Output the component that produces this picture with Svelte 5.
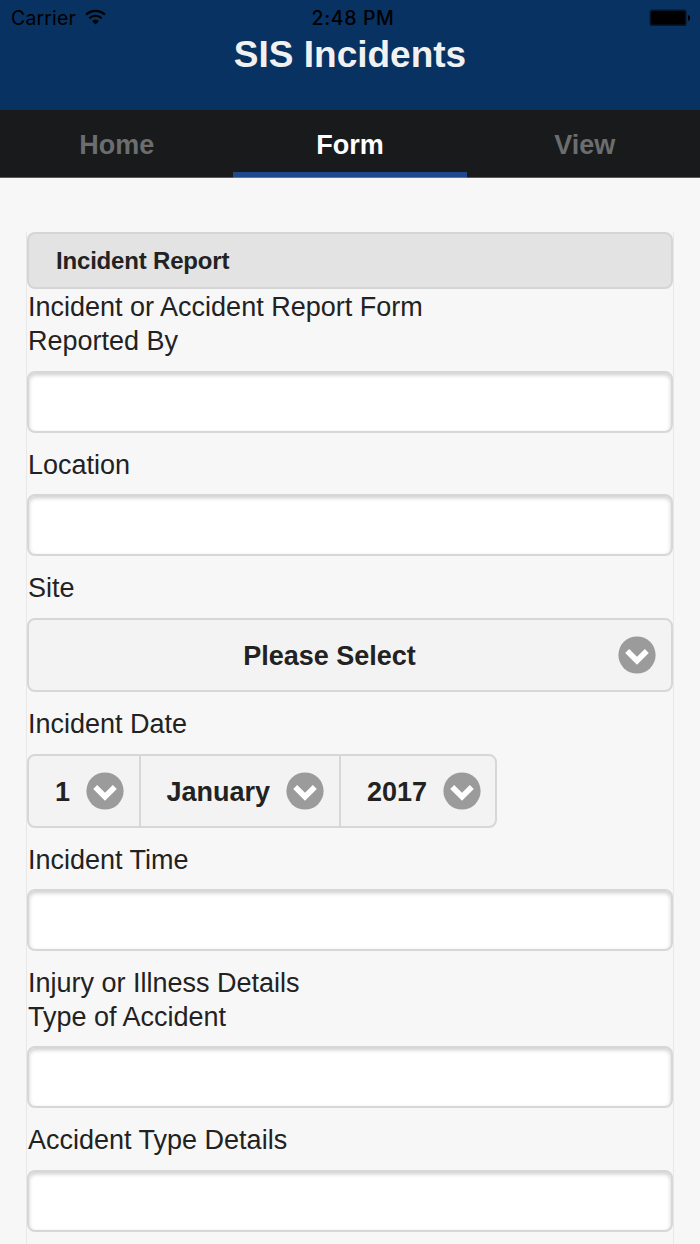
<script>
  const tabs = ['Home', 'Form', 'View'];
  const active = 'Form';
  const fields = [
    { labels: ['Incident or Accident Report Form', 'Reported By'], kind: 'text' },
    { labels: ['Location'], kind: 'text' },
    { labels: ['Site'], kind: 'select' },
    { labels: ['Incident Date'], kind: 'date' },
    { labels: ['Incident Time'], kind: 'text' },
    { labels: ['Injury or Illness Details', 'Type of Accident'], kind: 'text' },
    { labels: ['Accident Type Details'], kind: 'text' }
  ];
  const dateParts = [
    { name: 'day', value: '1' },
    { name: 'month', value: 'January' },
    { name: 'year', value: '2017' }
  ];
</script>

{#snippet arrow()}
  <svg class="arrow" viewBox="0 0 38 38" aria-hidden="true">
    <circle cx="19" cy="19" r="18.6" fill="#9b9b9b" />
    <path d="M9.2 15 L19 24.7 L28.8 15" fill="none" stroke="#fff" stroke-width="5.6" />
  </svg>
{/snippet}

<div class="page">
  <header>
    <div class="status">
      <div class="carrier">
        <span>Carrier</span>
        <svg class="wifi" viewBox="0 0 22 16" aria-hidden="true">
          <path d="M1.2 5.5 A14 14 0 0 1 20.8 5.5" fill="none" stroke="#000" stroke-width="2.3" />
          <path d="M4.6 9.3 A9.2 9.2 0 0 1 17.4 9.3" fill="none" stroke="#000" stroke-width="2.3" />
          <path d="M7.5 12.4 A5.3 5.3 0 0 1 14.5 12.4 L11 15.8 Z" fill="#000" />
        </svg>
      </div>
      <span class="clock">2:48 PM</span>
      <svg class="battery" viewBox="0 0 42 18" aria-hidden="true">
        <rect x="0.6" y="0.6" width="37" height="16.4" rx="2.6" fill="#04172d" />
        <rect x="2" y="2" width="34.2" height="13.6" rx="1" fill="#000" />
        <path d="M39 6 Q41.2 6.5 41.2 9 Q41.2 11.5 39 12 Z" fill="#000" />
      </svg>
    </div>
    <h1>SIS Incidents</h1>
  </header>

  <nav>
    {#each tabs as tab}
      <div class="tab" class:active={tab === active}><span>{tab}</span></div>
    {/each}
  </nav>

  <main>
    <h2>Incident Report</h2>
    {#each fields as field}
      <div class="field">
        {#each field.labels as label}
          <div class="label">{label}</div>
        {/each}
        {#if field.kind === 'text'}
          <div class="input"></div>
        {:else if field.kind === 'select'}
          <div class="select"><span>Please Select</span>{@render arrow()}</div>
        {:else}
          <div class="date">
            {#each dateParts as part}
              <div class="part {part.name}"><span>{part.value}</span>{@render arrow()}</div>
            {/each}
          </div>
        {/if}
      </div>
    {/each}
  </main>
</div>

<style>
  :global(body) { margin: 0; background: #f7f7f7; overflow: hidden; }
  .page {
    width: 700px;
    height: 1244px;
    overflow: hidden;
    box-sizing: border-box;
    display: flex;
    flex-direction: column;
    background: #f7f7f7;
    color: #222;
    font-family: "Liberation Sans", Arial, sans-serif;
  }
  header { flex: none; height: 110px; background: #083262; }
  .status {
    display: grid;
    grid-template-columns: 1fr auto 1fr;
    align-items: center;
    height: 35px;
    padding: 0 9px 0 11px;
    color: #000;
    font-family: Inter, sans-serif;
    font-size: 19.5px;
  }
  .carrier { display: flex; align-items: center; gap: 9px; letter-spacing: 0.15px; }
  .wifi { width: 21px; height: 16px; margin-top: -2px; }
  .clock { font-weight: 500; letter-spacing: 0.65px; padding-left: 4px; }
  .battery { justify-self: end; width: 42px; height: 18px; }
  h1 {
    margin: 0;
    padding-top: 1px;
    text-align: center;
    font-size: 37px;
    line-height: 38px;
    color: #f1f1f1;
  }
  nav {
    flex: none;
    display: grid;
    grid-template-columns: repeat(3, 1fr);
    box-sizing: border-box;
    height: 68px;
    border-bottom: 1px solid #58595b;
    background: #191a1b;
  }
  .tab {
    box-sizing: border-box;
    display: flex;
    justify-content: center;
    padding-top: 19px;
    border-bottom: 5px solid transparent;
    font-size: 27px;
    font-weight: bold;
    line-height: 32px;
    color: #6c6d6e;
  }
  .tab:last-child { padding-left: 3px; }
  .tab.active { color: #fff; border-color: #20488c; box-shadow: 0 1px #5777a8; }
  main {
    margin: 54px 26px 0;
    border: solid #e8e8e8;
    border-width: 0 1px;
    flex: 1 0 auto;
  }
  h2 {
    box-sizing: border-box;
    height: 57px;
    margin: 0 0 1.4px;
    padding-left: 27px;
    border: 2px solid #d5d5d5;
    border-radius: 8px;
    background: #e3e3e3;
    font-size: 24px;
    letter-spacing: -0.18px;
    line-height: 54px;
  }
  .field { margin-bottom: 15px; }
  .label { height: 33.6px; line-height: 34px; font-size: 27px; white-space: nowrap; padding-left: 1px; }
  .input, .select, .date { box-sizing: border-box; margin-top: 13px; border: 2px solid #d7d7d7; border-radius: 8px; }
  .input { height: 62px; background: #fff; box-shadow: inset 0 2px 4px rgba(0, 0, 0, 0.2); }
  .select, .date { height: 74px; background: #f3f3f3; font-size: 27px; font-weight: bold; display: flex; }
  .select { align-items: center; padding: 0 15px 0 0; }
  .select span { flex: 1; text-align: center; padding: 3px 0 0 12px; }
  .date { width: 470px; margin-top: 13.3px; }
  .part {
    box-sizing: border-box;
    display: flex;
    align-items: center;
    justify-content: flex-end;
    gap: 16px;
    padding-right: 15px;
    border-right: 2px solid #d7d7d7;
  }
  .part span { padding-top: 3px; }
  .day { width: 112px; }
  .month { width: 200px; }
  .year { flex: 1; border-right: 0; padding-right: 14px; }
  .arrow { flex: none; width: 38px; height: 38px; }
</style>
